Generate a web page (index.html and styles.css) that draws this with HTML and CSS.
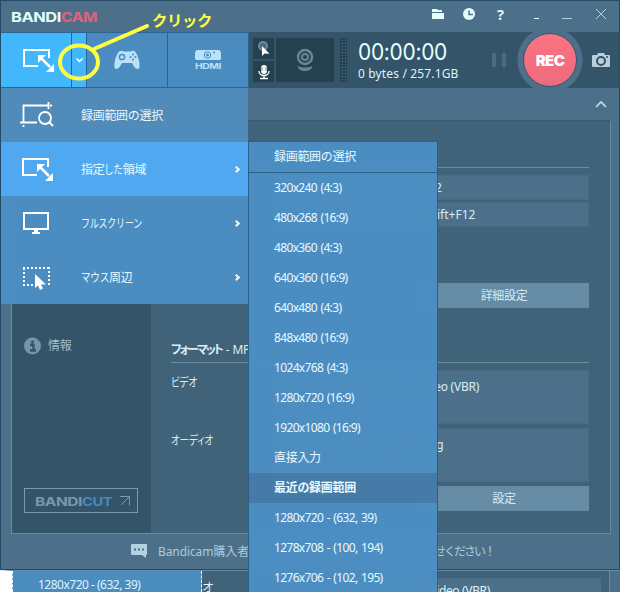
FILE: index.html
```html
<!DOCTYPE html>
<html lang="ja">
<head>
    <meta charset="UTF-8">
    <meta name="viewport" content="width=device-width, initial-scale=1.0">
    <title>Bandicam</title>
    <link rel="stylesheet" href="styles.css">
</head>
<body>
    <!-- Icons used more than once -->
    <svg class="defs" width="0" height="0">
        <symbol id="area" viewBox="0 0 34 26">
            <path d="M17 19H3V3h25v8" fill="none" stroke="#fff" stroke-width="2"/>
            <path d="M20 11l9 9" stroke="#fff" stroke-width="2.500"/>
            <path d="M17 8h8l-8 8zM33 25h-8l8-8z" fill="#fff"/>
        </symbol>
    </svg>

    <div class="window">
        <header class="titlebar">
            <svg class="logo" width="90" height="16">
                <text x="0" y="14" textLength="50" lengthAdjust="spacingAndGlyphs" fill="#e4ffff">BANDI</text>
                <text x="50" y="14" textLength="36" lengthAdjust="spacingAndGlyphs" fill="#e3617a">CAM</text>
            </svg>
            <div class="title-icons">
                <svg width="12" height="12"><path d="M0 1h5l1 1h4v2H0zM0 5h12v6H0z" fill="#e4ffff"/></svg>
                <svg width="12" height="12"><circle cx="6" cy="6" r="6" fill="#e4ffff"/><path d="M6 2.500v4h4" fill="none" stroke="#4d708a" stroke-width="1.500"/></svg>
                <span class="help">?</span>
                <svg width="5" height="12"><path d="M0 10.500h5" stroke="#e4ffff"/></svg>
                <svg width="10" height="12"><path d="M0 10.500h10" stroke="#b5d0dd"/></svg>
                <svg width="12" height="12"><path d="M1 1l10 10M11 1L1 11" stroke="#b5d0dd"/></svg>
            </div>
        </header>

        <div class="toolbar">
            <div class="modes">
                <div class="mode active"><svg width="34" height="26"><use href="#area"/></svg></div>
                <div class="mode drop"><svg width="7" height="5"><path d="M.5 .500l3 3 3-3" fill="none" stroke="#fff" stroke-width="1.500"/></svg></div>
                <div class="mode">
                    <svg width="26" height="20" viewBox="0 0 26 20">
                        <path d="M5 1.500Q7 0 10 1.500h6Q19 0 21 1.500C24 5 26 12 25.500 17 25 20 22 19.500 20 16.500L18 13H8L6 16.500C4 19.500 1 20 .5 17 0 12 2 5 5 1.500z" fill="#b9e2fa"/>
                        <circle cx="8" cy="7" r="2.600" fill="#b9e2fa" stroke="#4a8cc0" stroke-width="1.500"/>
                        <g fill="#4a8cc0"><circle cx="19" cy="4.500" r="1"/><circle cx="19" cy="9.500" r="1"/><circle cx="16.500" cy="7" r="1"/><circle cx="21.500" cy="7" r="1"/></g>
                    </svg>
                </div>
                <div class="mode">
                    <svg width="28" height="20" viewBox="0 0 28 20">
                        <path d="M3 0h22l2 2v7l-1 1H2l-1-1V2z" fill="#b9e2fa"/>
                        <rect x="10.500" y="2" width="6" height="6" rx="2" fill="none" stroke="#4a8cc0"/>
                        <circle cx="13.500" cy="5" r="1.500" fill="#4a8cc0"/><circle cx="20" cy="2.500" r="1" fill="#4a8cc0"/>
                        <text class="hdmi" x="1" y="18.500" textLength="26" lengthAdjust="spacingAndGlyphs">HDMI</text>
                    </svg>
                </div>
            </div>
            <div class="devices">
                <div class="small-btns">
                    <div class="device"><svg width="14" height="16"><circle cx="6" cy="5" r="4" fill="#47697f" stroke="#6d8b9f" stroke-width="2"/><path d="M5 5v10l2.500-2.500 5 .3z" fill="#fff"/></svg></div>
                    <div class="device"><svg width="12" height="16"><rect x="3" y="1" width="6" height="9" rx="3" fill="#fff"/><path d="M1 7c0 6 10 6 10 0M6 11v4M2 14.500h8" fill="none" stroke="#fff" stroke-width="1.300"/><path d="M3 4h2M3 6h2M7 4h2M7 6h2" stroke="#24404f" stroke-width=".6"/></svg></div>
                </div>
                <div class="device webcam"><svg width="18" height="24"><circle cx="9" cy="9" r="7" fill="none" stroke="#688698" stroke-width="2.500"/><circle cx="9" cy="9" r="3" fill="none" stroke="#688698" stroke-width="2"/><path d="M1.500 18q7.500 3 15 0-1 5-7.500 5t-7.500-5z" fill="#688698"/></svg></div>
            </div>
            <div class="level"></div>
            <div class="status">
                <svg width="92" height="23"><text class="clock" x="0" y="21" textLength="89" lengthAdjust="spacingAndGlyphs">00:00:00</text></svg>
                <p>0 bytes / 257.1GB</p>
            </div>
            <div class="pause"><i></i><i></i></div>
            <div class="rec-ring"><button class="rec">REC</button></div>
            <svg class="camera" width="18" height="15"><path d="M0 3q0-1 1-1h4l1-2h6l1 2h4q1 0 1 1v10q0 1-1 1H1q-1 0-1-1z" fill="#b9cfd9"/><circle cx="9" cy="8" r="4" fill="none" stroke="#335469" stroke-width="2"/><circle cx="15" cy="4" r="1" fill="#335469"/></svg>
        </div>

        <div class="notice-row">
            <svg width="12" height="8"><path d="M1 7l5-5 5 5" fill="none" stroke="#c5dbe5" stroke-width="1.700"/></svg>
        </div>

        <div class="panel">
            <nav class="sidebar">
                <div class="side-item info">
                    <svg width="17" height="18"><circle cx="8.500" cy="9" r="8.500" fill="#7894a8"/><path d="M8.500 3.500v3M6 8h3.500v5M6 13.500h6" fill="none" stroke="#335469" stroke-width="2.400"/></svg>
                    <span>情報</span>
                </div>
                <a class="bandicut">
                    <svg width="78" height="16"><g class="cut"><text x="0" y="13" textLength="47" lengthAdjust="spacingAndGlyphs" fill="#7998ac">BANDI</text><text x="47" y="13" textLength="30" lengthAdjust="spacingAndGlyphs" fill="#458bc2">CUT</text></g></svg>
                    <svg width="10" height="10"><path d="M0 .5h9.500V9.500M9 1L1 9" fill="none" stroke="#7998ac"/></svg>
                </a>
            </nav>
            <section class="settings">
                <h3>キャプチャー</h3>
                <div class="capture">
                    <div class="hotkeys">
                        <div class="field">F12</div>
                        <div class="field">Shift+F12</div>
                        <div class="button">詳細設定</div>
                    </div>
                </div>
                <h3 class="format-title"><b>フォーマット</b> - MP4</h3>
                <div class="format">
                    <span class="kana"><i>ビデオ</i></span>
                    <div class="field big video">H264 - Intel® Quick Sync Video (VBR)</div>
                    <span class="kana"><i>オーディオ</i></span>
                    <div class="field big audio">AAC - Advanced Audio Coding</div>
                </div>
                <div class="button">設定</div>
            </section>
        </div>

        <footer class="footer">
            <svg width="16" height="14"><path d="M1 0h14q1 0 1 1v9q0 1-1 1v3l-4-3H1q-1 0-1-1V1q0-1 1-1z" fill="#b3d1df"/><path d="M3 5.500h2M7 5.500h2M11 5.500h2" stroke="#4d708a" stroke-width="2"/></svg>
            <span class="buyer">Bandicam購入者ア</span>
            <span class="please">せください！</span>
        </footer>
    </div>

    <!-- Window behind -->
    <div class="behind">
        <div class="behind-menu">1280x720 - (632, 39)</div>
        <span class="behind-kana">オ</span>
        <div class="behind-field">Quick Sync Video (VBR)</div>
        <div class="behind-edge"></div>
    </div>

    <!-- Mode menu -->
    <ul class="menu">
        <li class="top">
            <svg width="34" height="26"><path d="M0 20.500h17M3.500 20V3.500h25M28.500 0v7M32 3.500h-2M3.500 25v-2" fill="none" stroke="#fff" stroke-width="1.800"/><circle cx="25" cy="16" r="6" fill="none" stroke="#fff" stroke-width="1.800"/><path d="M29 20l4 4" stroke="#fff" stroke-width="2"/></svg>
            <span>録画範囲の選択</span>
        </li>
        <li class="selected"><svg width="34" height="26"><use href="#area"/></svg><span>指定<i class="shita">した</i><i class="ryoiki">領域</i></span><em></em></li>
        <li>
            <svg width="34" height="26"><path d="M4 3h24v16H4z" fill="none" stroke="#fff" stroke-width="2"/><path d="M14 20h4v2h2v2h-8v-2h2z" fill="#fff"/></svg>
            <span><i class="full">フルスクリーン</i></span><em></em>
        </li>
        <li>
            <svg width="34" height="26"><path d="M3 4h27M29 3v19M3 21h11M4 4v17" fill="none" stroke="#fff" stroke-width="2" stroke-dasharray="2 2"/><path d="M15 10v14l3-2.500 2 4.500 3-1.500-2-4h5z" fill="#fff"/></svg>
            <span><i class="mouse">マウス</i>周辺</span><em></em>
        </li>
    </ul>

    <!-- Area size submenu -->
    <ul class="submenu">
        <li class="pick">録画範囲の選択</li>
        <li>320x240 (4:3)</li>
        <li>480x268 (16:9)</li>
        <li>480x360 (4:3)</li>
        <li>640x360 (16:9)</li>
        <li>640x480 (4:3)</li>
        <li>848x480 (16:9)</li>
        <li>1024x768 (4:3)</li>
        <li>1280x720 (16:9)</li>
        <li>1920x1080 (16:9)</li>
        <li class="jp">直接入力</li>
        <li class="recent">最近の録画範囲</li>
        <li>1280x720 - (632, 39)</li>
        <li>1278x708 - (100, 194)</li>
        <li>1276x706 - (102, 195)</li>
    </ul>

    <!-- Click marker -->
    <svg class="marker" width="160" height="80">
        <ellipse cx="24" cy="54" rx="19" ry="16.500" fill="none" stroke="#ffff42" stroke-width="4"/>
        <path d="M39 41l53-23" stroke="#ffff42" stroke-width="4" stroke-linecap="round"/>
        <text x="97" y="18" textLength="60" lengthAdjust="spacingAndGlyphs">クリック</text>
    </svg>
</body>
</html>
```
FILE: styles.css
```css
* {
    margin: 0;
    padding: 0;
    box-sizing: border-box;
}

body {
    position: relative;
    width: 620px;
    height: 592px;
    overflow: hidden;
    background: #335469;
    color: #dff4fb;
    font-family: "Noto Sans", "Noto Sans CJK JP", sans-serif;
    font-size: 12px;
    letter-spacing: -0.35px;
}

i {
    font-style: normal;
    display: inline-block;
}

svg {
    display: block;
    flex: none;
}

.defs {
    position: absolute;
}

.window {
    display: flex;
    flex-direction: column;
    width: 620px;
    height: 570px;
    background: #4d708a;
    border: 1px solid #234a67;
}

.titlebar {
    height: 31px;
    display: flex;
    justify-content: space-between;
    padding: 0 12px 0 10px;
    flex: none;
}

.logo {
    margin-top: 7px;
    font: bold 13.5px "Inter", sans-serif;
}

.title-icons {
    display: flex;
    align-items: center;
    height: 25px;
}

.title-icons svg:first-child {
    margin-right: -1px;
}

.title-icons svg:nth-child(2) {
    margin-left: 20px;
}

.help {
    margin: 0 29px 0 22px;
    width: 8px;
    font: bold 15px "Open Sans", sans-serif;
}

.title-icons svg:nth-child(5) {
    margin: 0 23px 0 23px;
}

.toolbar {
    display: flex;
    height: 56px;
    flex: none;
    background: #335469;
}

.modes {
    display: flex;
    width: 248px;
    background: #2c6591;
    gap: 1px;
    padding: 1px 1px 1px 0;
}

.mode {
    display: flex;
    align-items: center;
    justify-content: center;
    width: 80px;
    background: #4a8cc0;
}

.mode.active {
    width: 70px;
    background: #43b7fb;
    padding-left: 3px;
}

.mode.drop {
    width: 14px;
    background: #43b7fb;
}

.hdmi {
    font: bold 8px "Inter", sans-serif;
    fill: #b9e2fa;
}

.devices {
    display: flex;
    gap: 2px;
    padding: 6px 0 6px 4px;
}

.small-btns {
    display: flex;
    flex-direction: column;
    gap: 2px;
}

.device {
    display: flex;
    align-items: center;
    justify-content: center;
    width: 21px;
    height: 21px;
    background: #24414f;
}

.webcam {
    width: 58px;
    height: 44px;
}

.level {
    width: 8px;
    height: 45px;
    margin: 5px 11px 0 5px;
    background-color: #213a48;
    background-image: linear-gradient(#335469 1px, transparent 1px), linear-gradient(90deg, #335469 1px, transparent 1px);
    background-size: 3px 3px;
}

.status {
    width: 134px;
    padding-top: 7px;
}

.clock {
    font: 23.5px "Inter", sans-serif;
    fill: #e4ffff;
}

.status p {
    font: 12px/18px "Noto Sans", sans-serif;
    letter-spacing: 0.15px;
    margin-top: 3px;
}

.pause {
    display: flex;
    gap: 6px;
    padding-top: 21px;
    width: 25px;
}

.pause i {
    width: 4px;
    height: 14px;
    background: #4b6b80;
}

.rec-ring {
    width: 66px;
    height: 56px;
    display: flex;
    align-items: center;
    justify-content: center;
    background: radial-gradient(circle at 50% 50%, #4d708a 32px, transparent 33px);
}

.rec {
    width: 54px;
    height: 54px;
    border: 1px solid #33556c;
    border-radius: 50%;
    background: linear-gradient(#fb7482, #ec6b7c);
    color: #fff;
    font: 900 15px "Inter", sans-serif;
    letter-spacing: -0.6px;
}

.camera {
    margin: 21px 0 0 9px;
}

.notice-row {
    height: 32px;
    flex: none;
    display: flex;
    justify-content: flex-end;
    padding: 12px 12px 0 0;
}

.panel {
    display: flex;
    flex: none;
    width: 600px;
    height: 414px;
    margin-left: 10px;
    border: 1px solid #658ca6;
    border-top-color: #395c72;
    background: #41637a;
}

.sidebar {
    width: 139px;
    background: #335469;
    padding: 208px 13px 8px;
    color: #a7bfcc;
}

.side-item {
    height: 50px;
}

.side-item.info {
    display: flex;
    gap: 7px;
    align-items: flex-start;
    padding: 8px 0 0 0;
    line-height: 18px;
    margin-left: -1px;
}

.bandicut {
    display: flex;
    align-items: center;
    justify-content: space-between;
    height: 25px;
    width: 114px;
    border: 1px solid #789bad;
    padding: 0 7px 0 10px;
    margin-top: 109px;
    margin-left: -1px;
}

.cut {
    font: bold 12px "Inter", sans-serif;
}

.settings {
    width: 438px;
    padding: 21px 0 0 20px;
    color: #d8edf5;
}

.settings h3 {
    height: 26px;
    font-size: 12px;
    line-height: 22px;
    border-bottom: 1px solid #6b8da2;
    font-feature-settings: "palt";
}

.capture {
    height: 169px;
    padding: 7px 0 0 104px;
}

.field {
    height: 25px;
    margin-bottom: 2px;
    background: #4d708a;
    border: 1px solid #486b83;
    line-height: 23px;
    letter-spacing: 0;
    white-space: nowrap;
}

.hotkeys .field {
    padding-left: 146px;
}

.hotkeys .field + .field {
    padding-left: 147px;
}

.button {
    width: 170px;
    height: 25px;
    margin-left: auto;
    background: #668ba5;
    line-height: 25px;
    text-align: center;
}

.hotkeys .button {
    margin-top: 56px;
}

.settings .format-title {
    font-weight: normal;
    letter-spacing: -0.2px;
    line-height: 25px;
}

.format-title b {
    letter-spacing: -2.1px;
    margin-right: 1px;
}

.format {
    display: grid;
    grid-template-columns: 104px 1fr;
    row-gap: 4px;
    padding-top: 7px;
    margin-bottom: 4px;
}

.kana {
    line-height: 26px;
    letter-spacing: -0.2px;
    font-feature-settings: "palt";
}

.kana i {
    transform: scaleX(0.79);
    transform-origin: left;
}

.field.big {
    height: 54px;
    margin: 0;
    padding: 4px 0 0 5px;
    letter-spacing: -0.25px;
}

.format .kana i {
    transform: scaleX(0.8);
}

.field.audio {
    padding-left: 7px;
}

.footer {
    display: flex;
    align-items: center;
    height: 34px;
    padding: 0 0 0 130px;
    color: #a9cbdc;
    letter-spacing: -0.1px;
}

.buyer {
    margin-left: 11px;
    width: 279px;
    white-space: nowrap;
}

.please {
    letter-spacing: -2px;
    white-space: nowrap;
    margin-left: -3px;
}

.behind {
    display: flex;
    height: 22px;
    background: #41637a;
    border-left: 12px solid #fff;
    border-top: 1px solid #658ca6;
    overflow: hidden;
}

.behind-menu {
    width: 190px;
    flex: none;
    background: #4c8dc0;
    border-left: 1px dashed #fff;
    border-right: 1px dashed #fff;
    padding-left: 25px;
    line-height: 28px;
    letter-spacing: -0.5px;
}

.behind-kana {
    width: 81px;
    line-height: 34px;
}

.behind-field {
    width: 318px;
    height: 40px;
    flex: none;
    margin-top: 7px;
    padding-left: 86px;
    background: #4d708a;
    line-height: 26px;
}

.behind-edge {
    flex: 1;
    background: #4d708a;
    border-left: 1px solid #658ca6;
    margin-left: 8px;
}

/* Menus */
.menu,
.submenu {
    position: absolute;
    list-style: none;
    color: #e8faff;
    background: rgba(76, 142, 194, 0.985);
}

.menu {
    left: 1px;
    top: 88px;
    width: 247px;
    height: 216px;
}

.menu li {
    display: flex;
    align-items: center;
    height: 54px;
    padding: 0 9px 0 19px;
    letter-spacing: -0.3px;
}

.menu .top {
    background: #508bb9;
}

.menu .selected {
    background: #50a9f0;
}

.menu span {
    margin-left: 27px;
    flex: 1;
    white-space: nowrap;
}

.menu i {
    transform-origin: left;
}

.menu .shita {
    transform: scaleX(0.8);
}

.menu .ryoiki {
    margin-left: -5px;
}

.menu .full {
    transform: scaleX(0.75);
}

.menu .mouse {
    transform: scaleX(0.8);
    margin-right: -7px;
}

.menu em {
    width: 5px;
    height: 5px;
    border: solid #e8faff;
    border-width: 2px 2px 0 0;
    transform: rotate(45deg);
}

.submenu {
    left: 248px;
    top: 141px;
    width: 190px;
    height: 451px;
    border: 1px solid #286087;
    border-bottom: 0;
}

.submenu li {
    height: 30px;
    line-height: 30px;
    padding-left: 25px;
    letter-spacing: -0.65px;
    word-spacing: 1px;
}

.submenu .pick {
    height: 31px;
    border-bottom: 1px solid #286087;
    letter-spacing: -0.3px;
}

.submenu .jp {
    letter-spacing: -0.3px;
}

.submenu .recent {
    background: #457ba6;
    font-weight: bold;
    letter-spacing: -0.3px;
}

.marker {
    position: absolute;
    left: 55px;
    top: 8px;
}

.marker text {
    font: bold 15px "Noto Sans CJK JP", sans-serif;
    fill: #ffff42;
}
```
